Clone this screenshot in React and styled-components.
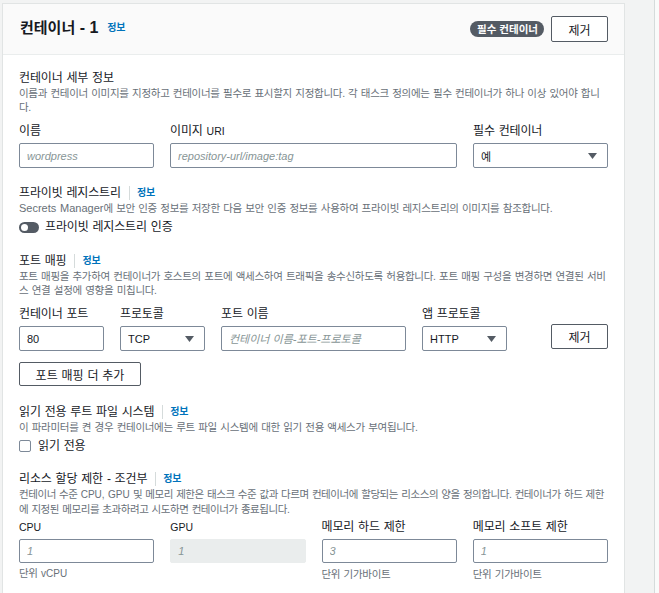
import React from "react";
import styled, { createGlobalStyle } from "styled-components";

const GlobalStyle = createGlobalStyle`
  html, body {
    margin: 0;
    padding: 0;
    background: #f2f3f3;
  }
  body {
    font-family: "Liberation Sans", "Noto Sans CJK KR", sans-serif;
    color: #16191f;
  }
  * {
    box-sizing: border-box;
  }
`;

const Page = styled.div`
  display: flex;
  min-height: 100vh;
`;

const Main = styled.main`
  flex: 1;
  padding: 3px 0 0 2px;
`;

const Rail = styled.aside`
  width: 5px;
  border-left: 1px solid #d5dbdb;
  background: #fafafa;
`;

const Card = styled.section`
  width: 623px;
  background: #fff;
  border: 1px solid #e1e4e4;
  border-bottom: none;
`;

const CardHeader = styled.header`
  height: 51px;
  display: flex;
  align-items: center;
  padding: 0 16px 0 17px;
  background: #fafafa;
  border-bottom: 1px solid #eaeded;
`;

const Title = styled.h2`
  flex: 1;
  margin: 0 0 2px;
  display: flex;
  align-items: center;
  font-size: 15px;
  font-weight: 700;
  line-height: 20px;
`;

const En = styled.span`
  letter-spacing: ${(p) => p.$ls || 0}px;
  font-size: ${(p) => p.$size || 11}px;
  white-space: pre;
`;

const InfoLink = styled.a`
  margin-left: ${(p) => p.$ml || 0}px;
  color: #0073bb;
  font-size: 10px;
  font-weight: 700;
  letter-spacing: -0.2px;
  text-decoration: none;
  cursor: pointer;
`;

const Badge = styled.span`
  height: 16px;
  line-height: 16px;
  padding: 0 6px 0 7px;
  border-radius: 8px;
  background: #545b64;
  color: #fff;
  font-size: 10.5px;
  font-weight: 700;
  margin-right: 7px;
`;

const Button = styled.button`
  height: ${(p) => p.$h || 25}px;
  width: ${(p) => (p.$w ? `${p.$w}px` : "auto")};
  padding: 0 8px;
  background: #fff;
  border: 1px solid #545b64;
  border-radius: 2px;
  font-family: inherit;
  font-size: 12px;
  word-spacing: 0.5px;
  color: #16191f;
  cursor: pointer;
`;

const CardBody = styled.div`
  padding: 15px 16px 40px 16px;
`;

const Heading = styled.h3`
  margin: ${(p) => p.$mt || 0}px 0 0;
  display: flex;
  align-items: center;
  font-size: 12px;
  font-weight: 400;
  line-height: 16px;
  letter-spacing: -0.15px;
  word-spacing: 0.7px;
  color: #16191f;
`;

const Divider = styled.span`
  display: inline-block;
  width: 1px;
  height: 14px;
  margin: 0 7px 0 8px;
  background: #d5dbdb;
`;

const Desc = styled.p`
  margin: 0;
  font-size: 10.5px;
  line-height: 14px;
  letter-spacing: ${(p) => p.$ls || -0.29}px;
  word-spacing: 0.7px;
  color: #687078;
`;

const FieldGrid = styled.div`
  margin-top: ${(p) => p.$mt || 0}px;
  display: grid;
  grid-template-columns: ${(p) => p.$cols};
  column-gap: 16px;
  align-items: end;
`;

const Field = styled.div`
  display: flex;
  flex-direction: column;
`;

const Label = styled.label`
  margin-bottom: 4px;
  font-size: 12px;
  line-height: 16px;
  letter-spacing: -0.15px;
  word-spacing: 0.7px;
  color: #16191f;
`;

const Input = styled.input`
  width: 100%;
  height: ${(p) => p.$h || 25}px;
  padding: 0 7px;
  border: 1px solid #7d8998;
  border-radius: 2px;
  background: #fff;
  font-family: inherit;
  font-size: 11px;
  color: #16191f;
  outline: none;

  &::placeholder {
    font-style: italic;
    color: #879596;
  }

  &:disabled {
    background: #eaeded;
    border-color: #eaeded;
  }
`;

const SelectBox = styled.div`
  height: 25px;
  display: flex;
  align-items: center;
  justify-content: space-between;
  padding: 0 10px 0 7px;
  border: 1px solid #7d8998;
  border-radius: 2px;
  background: #fff;
  font-size: 11px;
  color: #16191f;
`;

const RemoveCell = styled.div`
  justify-self: end;
  margin-bottom: 2px;
`;

const Row = styled.div`
  margin-top: ${(p) => p.$mt || 0}px;
  display: flex;
  align-items: center;
  gap: ${(p) => p.$gap || 7}px;
  font-size: 12px;
  line-height: 16px;
  letter-spacing: -0.15px;
  word-spacing: 0.7px;
`;

const Toggle = styled.span`
  position: relative;
  width: 20px;
  height: 11px;
  border-radius: 6px;
  background: #545b64;

  &::after {
    content: "";
    position: absolute;
    left: 2px;
    top: 2px;
    width: 7px;
    height: 7px;
    border-radius: 50%;
    background: #fff;
  }
`;

const Checkbox = styled.span`
  width: 12px;
  height: 12px;
  border: 1px solid #7d8998;
  border-radius: 2px;
  background: #fff;
`;

const AddRow = styled.div`
  margin-top: 11px;
`;

const Hint = styled.div`
  margin-top: 3px;
  min-height: 14px;
  font-size: 10.5px;
  line-height: 14px;
  letter-spacing: -0.29px;
  word-spacing: 0.7px;
  color: #687078;
`;

function Caret() {
  return (
    <svg width="9" height="6" viewBox="0 0 9 6">
      <polygon points="0,0 9,0 4.5,6" fill="#545b64" />
    </svg>
  );
}

function Select({ value }) {
  return (
    <SelectBox>
      <span>{value}</span>
      <Caret />
    </SelectBox>
  );
}

function SectionHeading({ children, mt }) {
  return (
    <Heading $mt={mt}>
      {children}
      <Divider />
      <InfoLink>정보</InfoLink>
    </Heading>
  );
}

export default function App() {
  return (
    <>
      <GlobalStyle />
      <Page>
        <Main>
          <Card>
            <CardHeader>
              <Title>
                컨테이너<En $size={16}> - 1</En>
                <InfoLink $ml={9}>정보</InfoLink>
              </Title>
              <Badge>필수 컨테이너</Badge>
              <Button $h={26} $w={57}>제거</Button>
            </CardHeader>

            <CardBody>
              <Heading>컨테이너 세부 정보</Heading>
              <Desc>
                이름과 컨테이너 이미지를 지정하고 컨테이너를 필수로 표시할지 지정합니다. 각 태스크 정의에는 필수 컨테이너가 하나 이상 있어야 합니다.
              </Desc>
              <FieldGrid $mt={9} $cols="135px 287px 135px">
                <Field>
                  <Label>이름</Label>
                  <Input placeholder="wordpress" />
                </Field>
                <Field>
                  <Label>
                    이미지 <En $size={10.5}>URI</En>
                  </Label>
                  <Input placeholder="repository-url/image:tag" />
                </Field>
                <Field>
                  <Label>필수 컨테이너</Label>
                  <Select value="예" />
                </Field>
              </FieldGrid>

              <SectionHeading mt={17}>프라이빗 레지스트리</SectionHeading>
              <Desc>
                <En>Secrets Manager</En>에 보안 인증 정보를 저장한 다음 보안 인증 정보를 사용하여 프라이빗 레지스트리의 이미지를 참조합니다.
              </Desc>
              <Row $mt={4} $gap={6}>
                <Toggle />
                프라이빗 레지스트리 인증
              </Row>

              <SectionHeading mt={18}>포트 매핑</SectionHeading>
              <Desc>
                포트 매핑을 추가하여 컨테이너가 호스트의 포트에 액세스하여 트래픽을 송수신하도록 허용합니다. 포트 매핑 구성을 변경하면 연결된 서비스 연결 설정에 영향을 미칩니다.
              </Desc>
              <FieldGrid $mt={9} $cols="85px 85px 185px 85px 1fr">
                <Field>
                  <Label>컨테이너 포트</Label>
                  <Input defaultValue="80" />
                </Field>
                <Field>
                  <Label>프로토콜</Label>
                  <Select value="TCP" />
                </Field>
                <Field>
                  <Label>포트 이름</Label>
                  <Input placeholder="컨테이너 이름-포트-프로토콜" />
                </Field>
                <Field>
                  <Label>앱 프로토콜</Label>
                  <Select value="HTTP" />
                </Field>
                <RemoveCell>
                  <Button $w={57}>제거</Button>
                </RemoveCell>
              </FieldGrid>
              <AddRow>
                <Button $h={24} $w={122}>포트 매핑 더 추가</Button>
              </AddRow>

              <SectionHeading mt={18}>읽기 전용 루트 파일 시스템</SectionHeading>
              <Desc>
                이 파라미터를 켠 경우 컨테이너에는 루트 파일 시스템에 대한 읽기 전용 액세스가 부여됩니다.
              </Desc>
              <Row $mt={4}>
                <Checkbox />
                읽기 전용
              </Row>

              <SectionHeading mt={17}>리소스 할당 제한 - 조건부</SectionHeading>
              <Desc $ls={-0.44}>
                컨테이너 수준 <En $size={10}>CPU, GPU</En> 및 메모리 제한은 태스크 수준 값과 다르며 컨테이너에 할당되는 리소스의 양을 정의합니다. 컨테이너가 하드 제한에 지정된 메모리를 초과하려고 시도하면 컨테이너가 종료됩니다.
              </Desc>
              <FieldGrid $mt={3} $cols="repeat(4, 1fr)">
                <Field>
                  <Label>
                    <En $size={10.5}>CPU</En>
                  </Label>
                  <Input $h={24} placeholder="1" />
                </Field>
                <Field>
                  <Label>
                    <En $size={10.5}>GPU</En>
                  </Label>
                  <Input $h={24} placeholder="1" disabled />
                </Field>
                <Field>
                  <Label>메모리 하드 제한</Label>
                  <Input $h={24} placeholder="3" />
                </Field>
                <Field>
                  <Label>메모리 소프트 제한</Label>
                  <Input $h={24} placeholder="1" />
                </Field>
              </FieldGrid>
              <FieldGrid $cols="repeat(4, 1fr)">
                <Hint>
                  단위 <En $size={10}>vCPU</En>
                </Hint>
                <Hint />
                <Hint>단위 기가바이트</Hint>
                <Hint>단위 기가바이트</Hint>
              </FieldGrid>
            </CardBody>
          </Card>
        </Main>
        <Rail />
      </Page>
    </>
  );
}
